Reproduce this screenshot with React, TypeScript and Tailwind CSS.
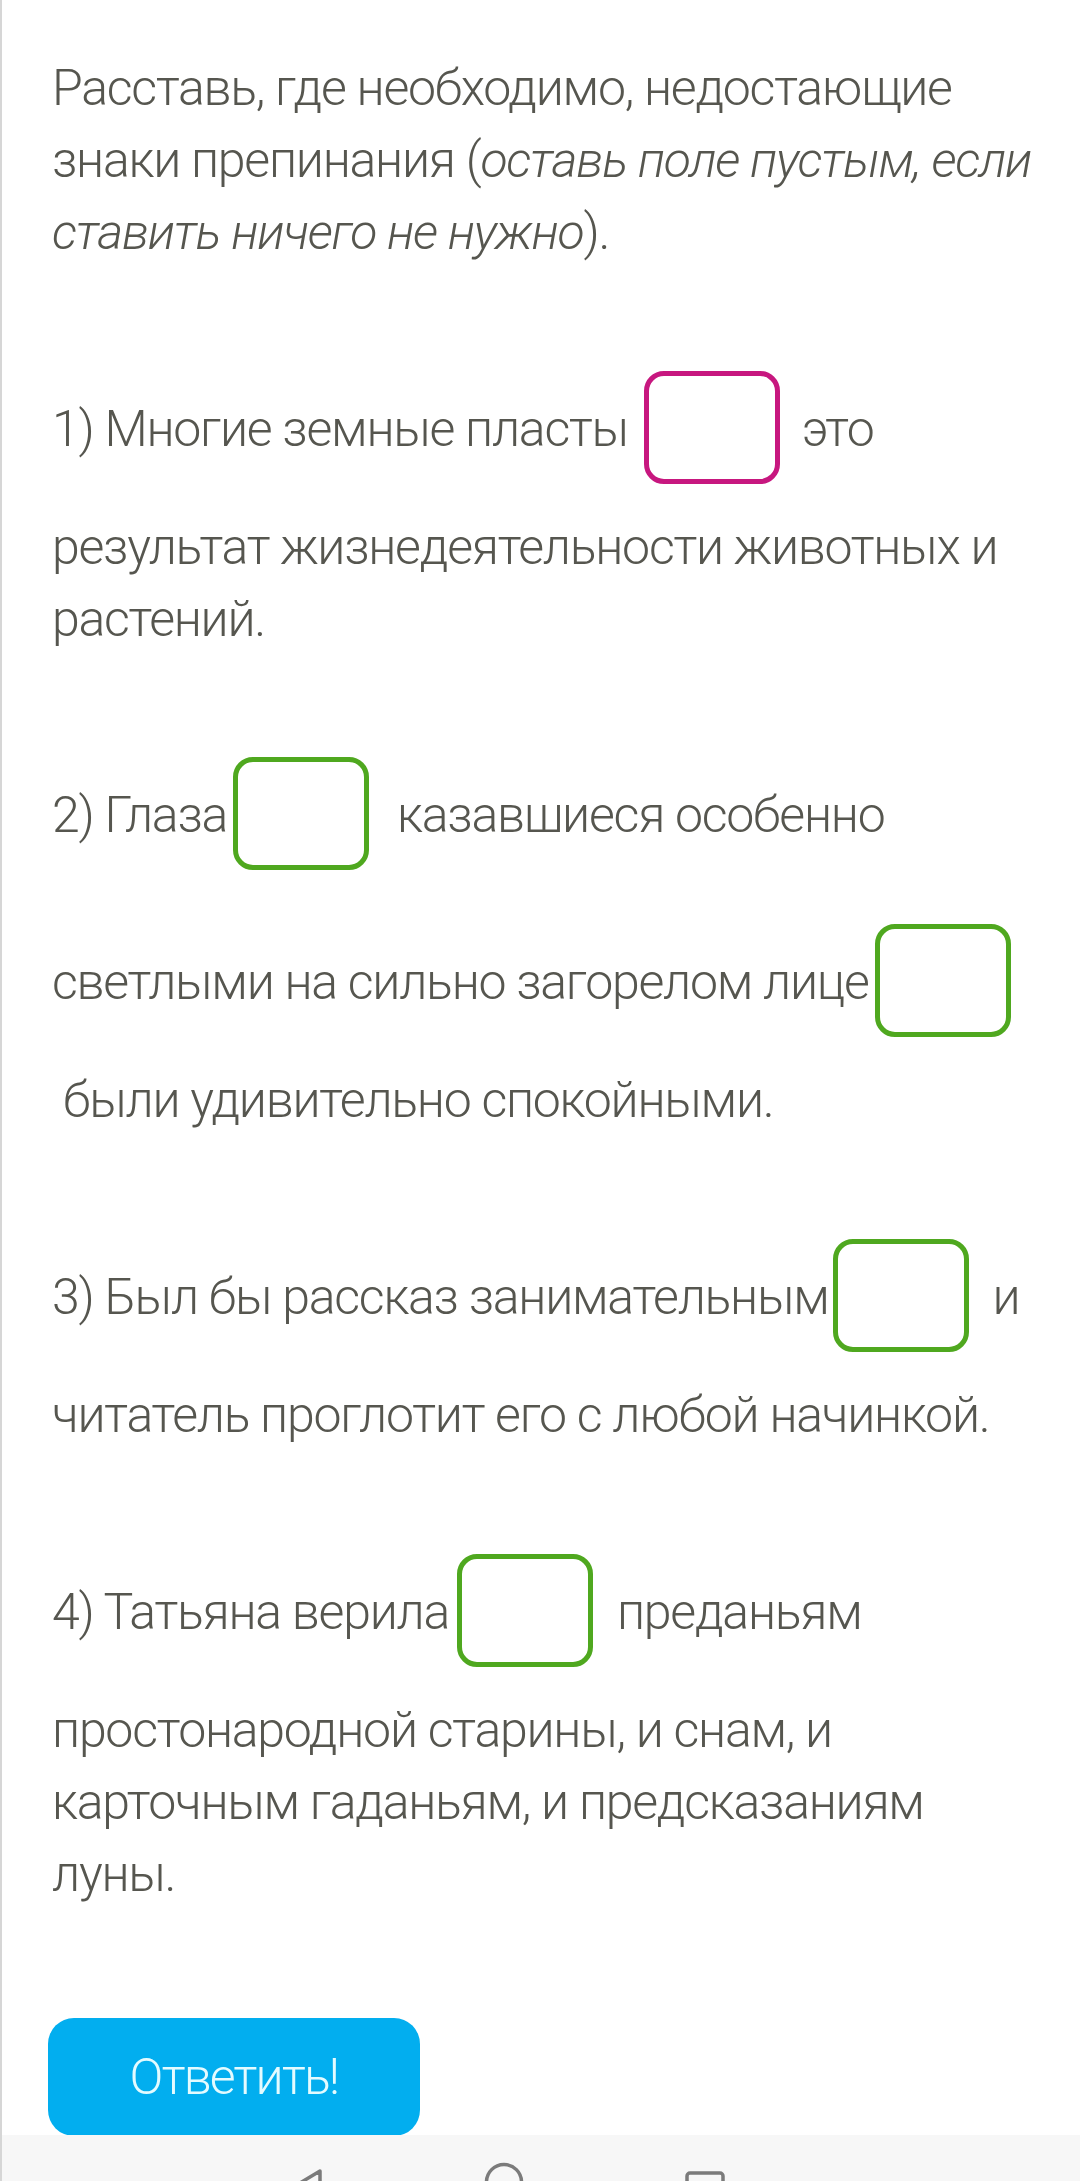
import React from "react";

const MAG = "border-[#c7177f]";
const GRN = "border-[#4fa81f]";

function Box({ color, className = "" }: { color: "m" | "g"; className?: string }) {
  return (
    <span
      className={`inline-block w-[136px] h-[113px] my-[27px] border-[5px] rounded-[20px] bg-white align-[-65px] ${
        color === "m" ? MAG : GRN
      } ${className}`}
    />
  );
}

export default function App() {
  return (
    <div
      className="relative w-[1080px] h-[2181px] overflow-hidden bg-white border-l-[2px] border-[#d6d6d6]"
      style={{ fontFamily: "Roboto, 'Noto Sans', sans-serif" }}
    >
      <div className="pl-[50px] pr-[20px] pt-[52px] text-[50px] leading-[72px] font-light tracking-[-1.25px] text-[#56564f]">
        <p className="whitespace-nowrap">
          Расставь, где необходимо, недостающие
          <br />
          знаки препинания (<i>оставь поле пустым, если</i>
          <br />
          <i>ставить ничего не нужно</i>).
        </p>

        <p className="mt-[76px] whitespace-nowrap">
          1) Многие земные пласты
          <Box color="m" className="ml-[16px] mr-[22px]" />
          это
          <br />
          результат жизнедеятельности животных и
          <br />
          растений.
        </p>

        <p className="mt-[75px] whitespace-nowrap">
          2) Глаза
          <Box color="g" className="ml-[6px] mr-[28px]" />
          казавшиеся особенно
          <br />
          светлыми на сильно загорелом лице
          <Box color="g" className="ml-[6px]" />
          <br />
          {"\u00a0"}были удивительно спокойными.
        </p>

        <p className="mt-[76px] whitespace-nowrap">
          3) Был бы рассказ занимательным
          <Box color="g" className="ml-[4px] mr-[24px]" />
          и
          <br />
          читатель проглотит его с любой начинкой.
        </p>

        <p className="mt-[76px] whitespace-nowrap">
          4) Татьяна верила
          <Box color="g" className="ml-[8px] mr-[24px]" />
          преданьям
          <br />
          простонародной старины, и снам, и
          <br />
          карточным гаданьям, и предсказаниям
          <br />
          луны.
        </p>

        <button className="mt-[108px] -ml-[4px] w-[372px] h-[118px] rounded-[26px] bg-[#02aeef] text-[#e4fbff] text-[50px] leading-[72px] font-light tracking-[-1.8px] flex items-center justify-center">
          Ответить!
        </button>
      </div>

      <div className="absolute left-0 right-0 bottom-0 h-[46px] bg-[#f7f7f7]">
        <svg width="1080" height="46" viewBox="0 0 1080 46" className="block">
          <path
            d="M318 36 L288 54 L318 72 Z"
            fill="none"
            stroke="#7b7b7b"
            strokeWidth="3.5"
            strokeLinejoin="round"
          />
          <circle cx="502" cy="47" r="17.5" fill="none" stroke="#7b7b7b" strokeWidth="3.5" />
          <rect x="685" y="38" width="36" height="36" rx="3" fill="none" stroke="#7b7b7b" strokeWidth="3.5" />
        </svg>
      </div>
    </div>
  );
}
